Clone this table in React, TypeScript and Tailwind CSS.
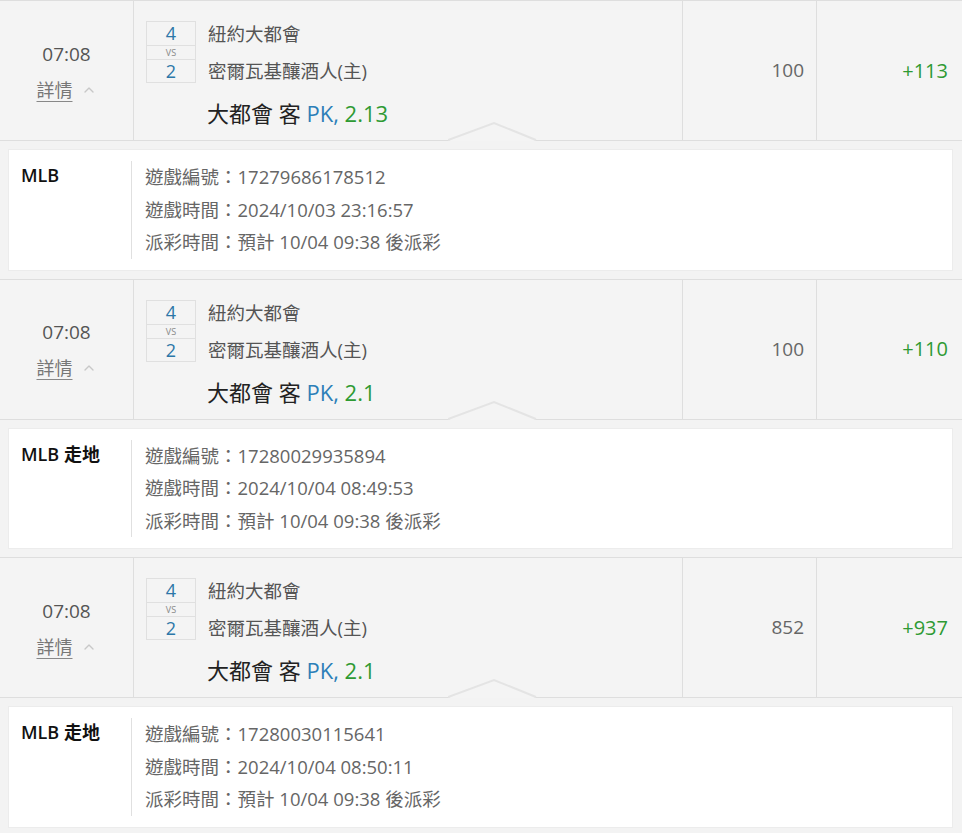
import React from 'react';
import { ChevronUp } from 'lucide-react';

type Bet = {
  time: string;
  home: number;
  away: number;
  teamA: string;
  teamB: string;
  pick: string;
  odds: string;
  stake: string;
  win: string;
  league: string;
  gameId: string;
  gameTime: string;
  payout: string;
};

const bets: Bet[] = [
  {
    time: '07:08', home: 4, away: 2, teamA: '紐約大都會', teamB: '密爾瓦基釀酒人(主)',
    pick: '大都會 客', odds: '2.13', stake: '100', win: '+113', league: 'MLB',
    gameId: '17279686178512', gameTime: '2024/10/03 23:16:57', payout: '預計 10/04 09:38 後派彩'
  },
  {
    time: '07:08', home: 4, away: 2, teamA: '紐約大都會', teamB: '密爾瓦基釀酒人(主)',
    pick: '大都會 客', odds: '2.1', stake: '100', win: '+110', league: 'MLB 走地',
    gameId: '17280029935894', gameTime: '2024/10/04 08:49:53', payout: '預計 10/04 09:38 後派彩'
  },
  {
    time: '07:08', home: 4, away: 2, teamA: '紐約大都會', teamB: '密爾瓦基釀酒人(主)',
    pick: '大都會 客', odds: '2.1', stake: '852', win: '+937', league: 'MLB 走地',
    gameId: '17280030115641', gameTime: '2024/10/04 08:50:11', payout: '預計 10/04 09:38 後派彩'
  }
];

const BetRow = ({ bet }: { bet: Bet }) => (
  <div>
    {/* Main row */}
    <div className="relative flex h-[141px] border-y border-[#dedede] bg-[#f4f4f4]">
      <div className="flex w-[134px] shrink-0 flex-col items-center justify-center border-r border-[#dedede] pt-[2px]">
        <div className="text-[19px] leading-[24px] text-[#555]">{bet.time}</div>
        <div className="mt-[12px] flex items-center gap-[8px] text-[18px] leading-[24px] text-[#777]">
          <span className="underline underline-offset-[4px] decoration-[#888]">詳情</span>
          <ChevronUp size={16} strokeWidth={2} className="text-[#c8c8c8]" />
        </div>
      </div>

      <div className="flex-1 border-r border-[#dedede] pl-[12px] pt-[20px]">
        <div className="flex">
          <div className="flex w-[50px] flex-col border border-[#e0e0e0] text-center">
            <div className="h-[23px] text-[18px] leading-[23px] text-[#2c77a8]">{bet.home}</div>
            <div className="h-[14px] border-t border-[#e0e0e0] text-[9px] leading-[13px] text-[#888]">VS</div>
            <div className="h-[23px] border-t border-[#e0e0e0] text-[18px] leading-[22px] text-[#2c77a8]">{bet.away}</div>
          </div>
          <div className="ml-[12px] flex h-[62px] flex-col justify-between text-[18.5px] leading-[25px] text-[#555]">
            <div>{bet.teamA}</div>
            <div>{bet.teamB}</div>
          </div>
        </div>
        <div className="ml-[61px] mt-[16px] text-[22px] leading-[28px] text-[#222]">
          {bet.pick} <span className="text-[#2c7fb8]">PK,</span> <span className="text-[#2e9a33]">{bet.odds}</span>
        </div>
      </div>

      <div className="flex w-[134px] shrink-0 items-center justify-end border-r border-[#dedede] pr-[12px] text-[19px] text-[#666]">
        {bet.stake}
      </div>
      <div className="flex flex-1 max-w-[145px] items-center justify-end pr-[14px] text-[20px] text-[#2e9a33]">
        {bet.win}
      </div>

      <svg className="absolute bottom-[-1px] left-[448px]" width="90" height="20" viewBox="0 0 90 20">
        <polygon points="0,20 46,2 88,20" fill="#f4f4f4" />
        <polyline points="0,19 46,2 88,19" fill="none" stroke="#e4e4e4" strokeWidth="2" />
      </svg>
    </div>

    {/* Details */}
    <div className="bg-[#f3f3f3] px-[8px] py-[8px]">
      <div className="mr-[1px] flex border border-[#ececec] bg-white py-[11px]">
        <div className="w-[122px] shrink-0 pl-[12px] pt-[1px] text-[18px] font-semibold leading-[26px] text-[#111]">
          {bet.league}
        </div>
        <div className="border-l border-[#e0e0e0] pl-[13px] text-[18.5px] leading-[32.5px] text-[#666]">
          <div>遊戲編號：{bet.gameId}</div>
          <div>遊戲時間：{bet.gameTime}</div>
          <div>派彩時間：{bet.payout}</div>
        </div>
      </div>
    </div>
  </div>
);

export default function App() {
  return (
    <div
      className="w-[962px] bg-white"
      style={{ fontFamily: '"Open Sans", "Noto Sans CJK TC", sans-serif' }}
    >
      {bets.map((bet, i) => (
        <BetRow key={i} bet={bet} />
      ))}
    </div>
  );
}
